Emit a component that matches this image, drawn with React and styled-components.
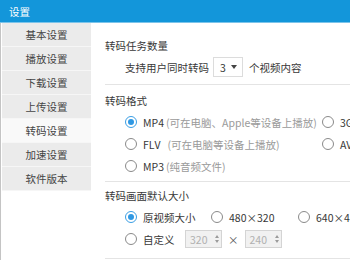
import React from 'react';
import styled, { createGlobalStyle } from 'styled-components';

const GlobalStyle = createGlobalStyle`
    body {
        margin: 0;
        background: #ffffff;
        font-family: "Noto Sans CJK SC", "Noto Sans", sans-serif;
        font-size: 10.5px;
        color: #383838;
    }
`;

const Window = styled.div`
    width: 350px;
    height: 260px;
    overflow: hidden;
    display: flex;
    flex-direction: column;
`;

const TitleBar = styled.div`
    height: 23px;
    line-height: 23px;
    padding-left: 9px;
    background: #1396da;
    color: #ffffff;
    font-size: 10.5px;
    border-bottom: 1px solid #7cc4ea;
    box-sizing: border-box;
    flex-shrink: 0;
`;

const Body = styled.div`
    flex: 1;
    display: flex;
    border-left: 1px solid #c4c4c4;
    min-height: 0;
`;

const Sidebar = styled.div`
    width: 90px;
    padding-left: 1px;
    flex-shrink: 0;
    box-sizing: border-box;
`;

const MenuItem = styled.div`
    height: 24px;
    line-height: 23px;
    text-align: center;
    color: #444444;
    background: ${p => (p.active ? '#f9f9f9' : '#ebebeb')};
    border-bottom: 1px solid #f6f6f6;
    box-sizing: border-box;
`;

const Content = styled.div`
    flex: 1;
    padding-left: 14px;
    white-space: nowrap;
`;

const Section = styled.div`
    padding: ${p => p.pad};
    border-bottom: 1px solid #e4e4e4;
`;

const Heading = styled.div`
    height: 20px;
    line-height: 20px;
`;

const Row = styled.div`
    height: 22px;
    display: flex;
    align-items: center;
    padding-left: 20px;
`;

const Cell = styled.div`
    width: ${p => p.w}px;
    flex-shrink: 0;
    display: flex;
    align-items: center;
`;

const Radio = styled.span`
    width: 12px;
    height: 12px;
    border-radius: 50%;
    border: 1px solid ${p => (p.checked ? '#3a9ee4' : '#8a8a8a')};
    box-sizing: border-box;
    margin-right: 6px;
    display: inline-flex;
    align-items: center;
    justify-content: center;
    flex-shrink: 0;
    background: #ffffff;

    &::after {
        content: '';
        width: 6px;
        height: 6px;
        border-radius: 50%;
        background: ${p => (p.checked ? '#2f98e3' : 'transparent')};
    }
`;

const Hint = styled.span`
    color: #9a9a9a;
    margin-left: ${p => p.gap || 2}px;
`;

const Select = styled.div`
    width: 30px;
    height: 20px;
    margin: 0 6px 0 4px;
    border: 1px solid #dcdcdc;
    box-sizing: border-box;
    display: flex;
    align-items: center;
    justify-content: space-between;
    padding: 0 5px 0 6px;
`;

const Caret = styled.span`
    width: 0;
    height: 0;
    border-left: 3.5px solid transparent;
    border-right: 3.5px solid transparent;
    border-top: 4px solid #444444;
`;

const NumberBox = styled.div`
    width: 37px;
    height: 18px;
    border: 1px solid #d4d4d4;
    background: #f1f1f1;
    box-sizing: border-box;
    display: flex;
    align-items: center;
    justify-content: space-between;
    padding: 0 2px 0 4px;
    color: #b0b0b0;
`;

const Spin = styled.span`
    display: flex;
    flex-direction: column;
    gap: 2px;

    &::before, &::after {
        content: '';
        width: 0;
        height: 0;
        border-left: 2.5px solid transparent;
        border-right: 2.5px solid transparent;
    }
    &::before { border-bottom: 3px solid #9a9a9a; }
    &::after { border-top: 3px solid #9a9a9a; }
`;

const Times = styled.span`
    margin: 0 6px;
    color: #555555;
`;

const menu = ['基本设置', '播放设置', '下载设置', '上传设置', '转码设置', '加速设置', '软件版本'];

const RadioItem = ({ checked, label, hint, gap, w }) => (
    <Cell w={w}>
        <Radio checked={checked} />
        <span>{label}</span>
        {hint && <Hint gap={gap}>{hint}</Hint>}
    </Cell>
);

const App = () => {
    return (
        <>
            <GlobalStyle />
            <Window>
                <TitleBar>设置</TitleBar>
                <Body>
                    <Sidebar>
                        {menu.map(item => (
                            <MenuItem key={item} active={item === '转码设置'}>{item}</MenuItem>
                        ))}
                    </Sidebar>
                    <Content>
                        <Section pad="13px 0 6px">
                            <Heading>转码任务数量</Heading>
                            <Row>
                                支持用户同时转码
                                <Select>3<Caret /></Select>
                                个视频内容
                            </Row>
                        </Section>
                        <Section pad="6px 0 4px">
                            <Heading>转码格式</Heading>
                            <Row>
                                <RadioItem w={197} checked label="MP4" hint="(可在电脑、Apple等设备上播放)" />
                                <RadioItem w={200} label="3GP" hint="(可在手机等设备上播放)" />
                            </Row>
                            <Row>
                                <RadioItem w={197} label="FLV" hint="(可在电脑等设备上播放)" gap={7} />
                                <RadioItem w={200} label="AVI" hint="(可在电脑等设备上播放)" />
                            </Row>
                            <Row>
                                <RadioItem w={197} label="MP3" hint="(纯音频文件)" />
                            </Row>
                        </Section>
                        <Section pad="4px 0 8px">
                            <Heading>转码画面默认大小</Heading>
                            <Row>
                                <RadioItem w={86} checked label="原视频大小" />
                                <RadioItem w={87} label="480×320" />
                                <RadioItem w={90} label="640×480" />
                            </Row>
                            <Row>
                                <Cell w={60}>
                                    <Radio />
                                    <span>自定义</span>
                                </Cell>
                                <NumberBox>320<Spin /></NumberBox>
                                <Times>×</Times>
                                <NumberBox>240<Spin /></NumberBox>
                            </Row>
                        </Section>
                    </Content>
                </Body>
            </Window>
        </>
    );
};

export default App;
